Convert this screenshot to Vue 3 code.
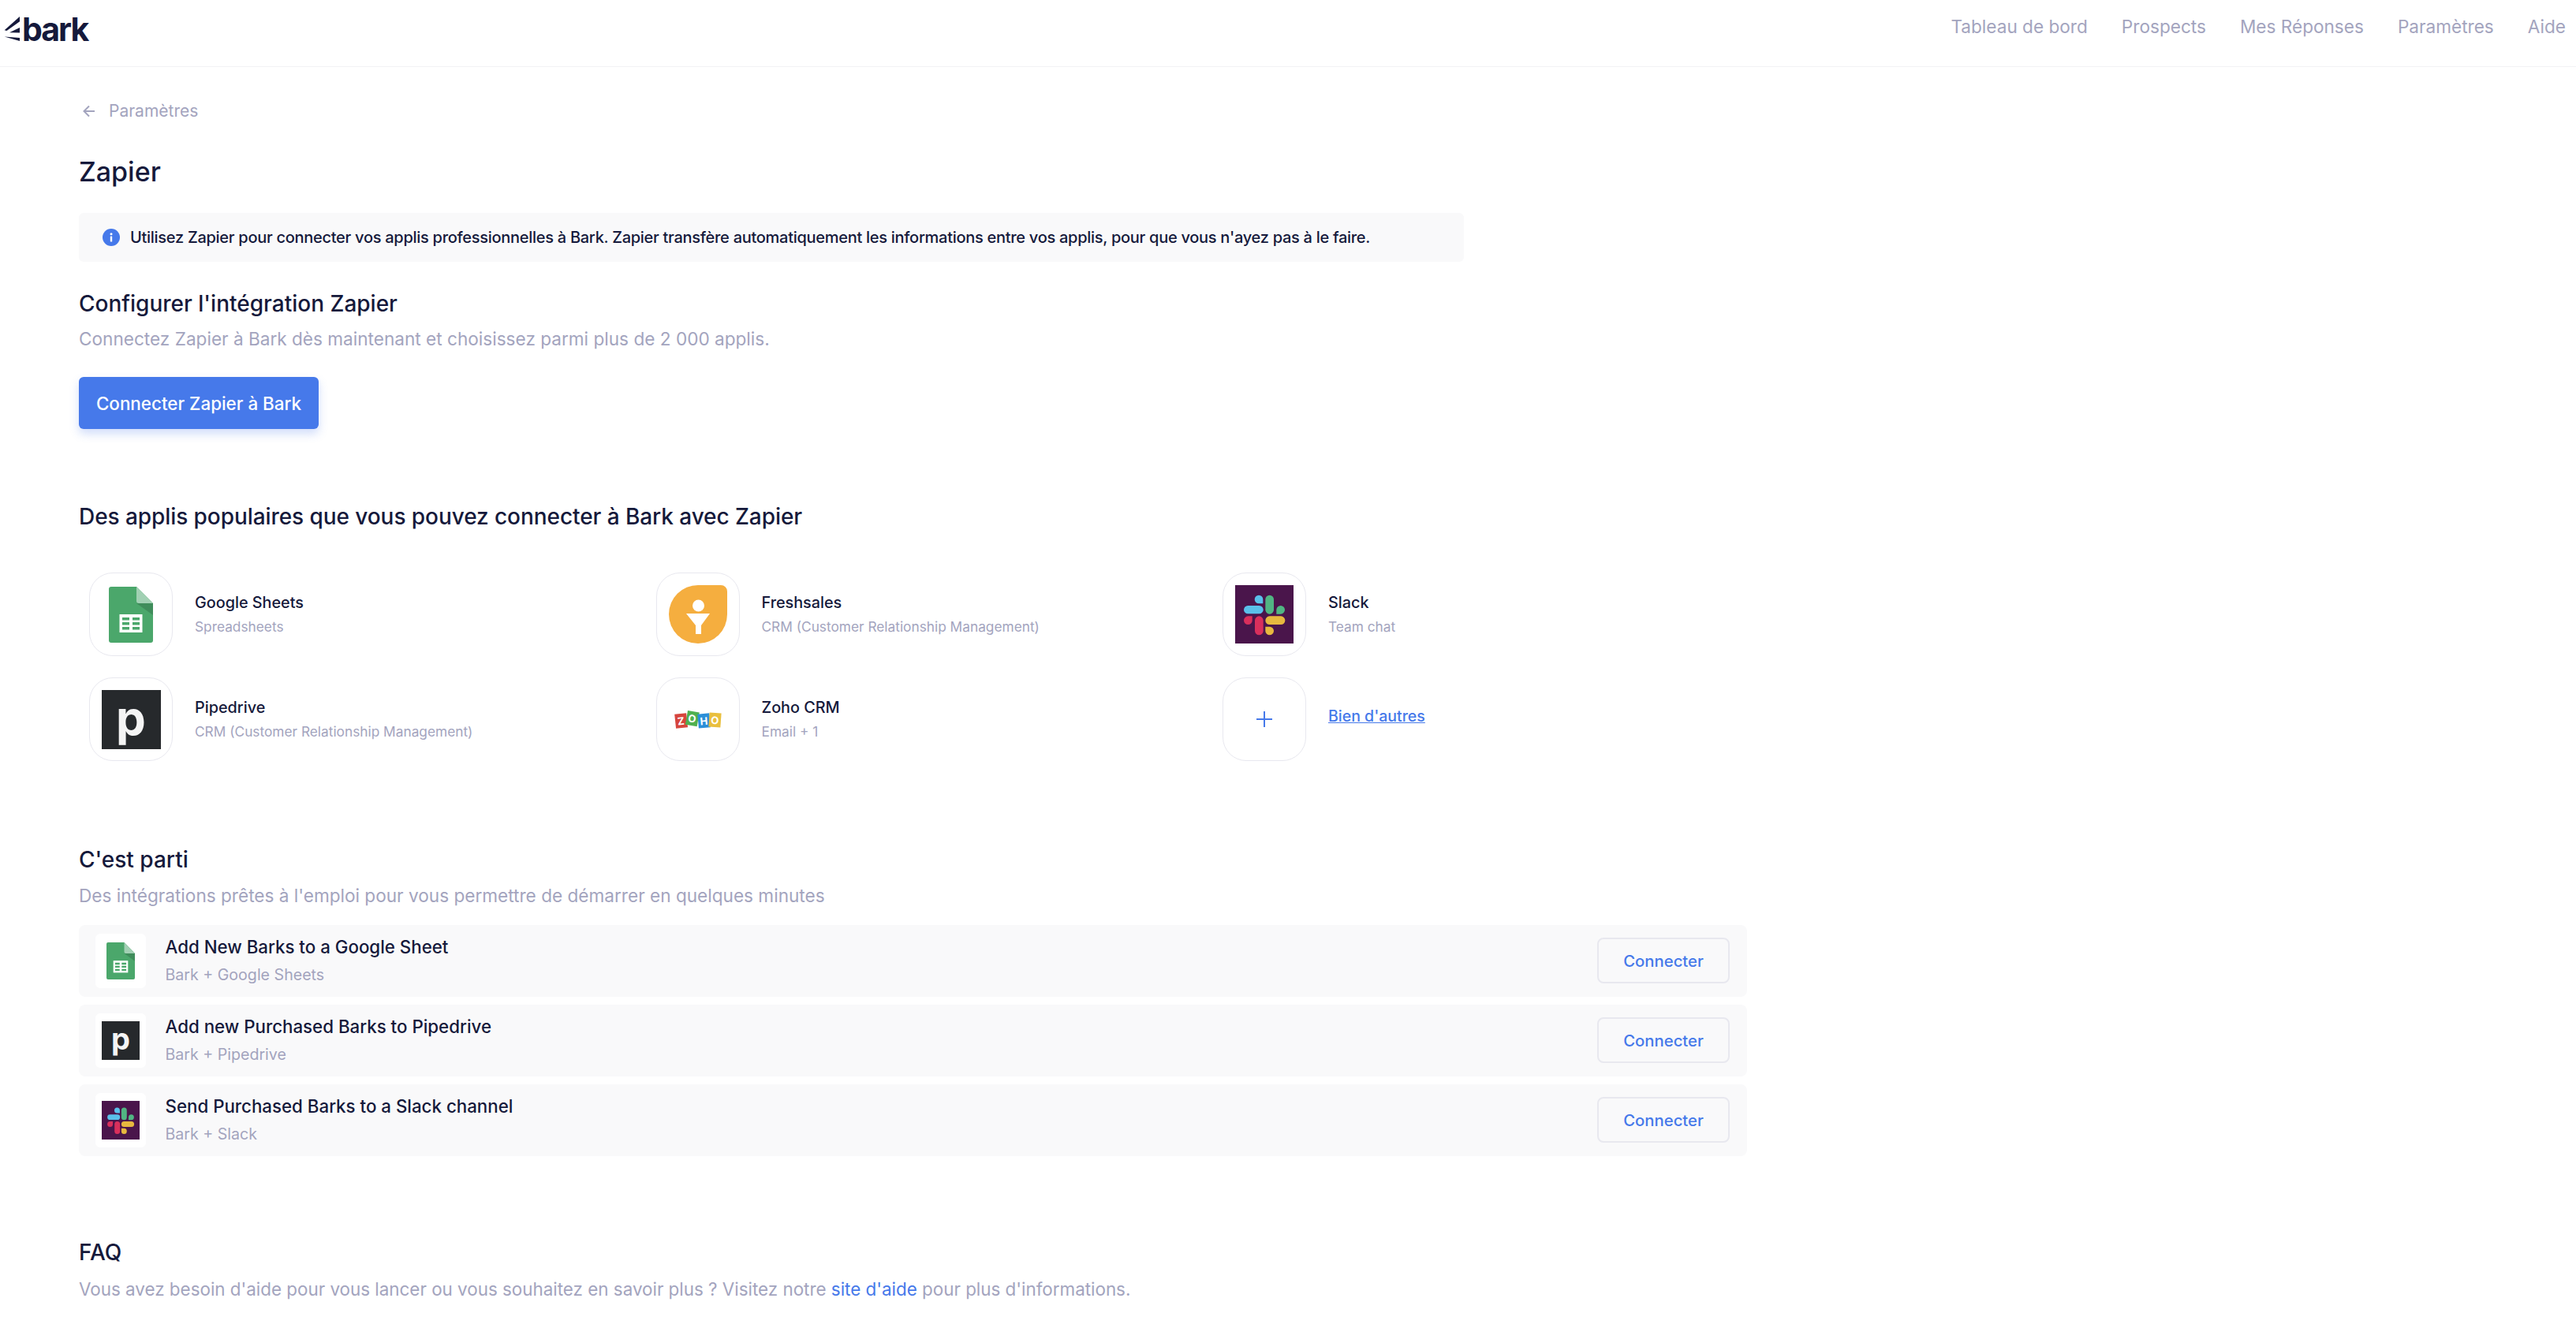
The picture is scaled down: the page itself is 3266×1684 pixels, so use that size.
<script setup>
// Приложения в сетке
const apps = [
  { icon: "sheets", name: "Google Sheets", desc: "Spreadsheets" },
  { icon: "freshsales", name: "Freshsales", desc: "CRM (Customer Relationship Management)" },
  { icon: "slack", name: "Slack", desc: "Team chat" },
  { icon: "pipedrive", name: "Pipedrive", desc: "CRM (Customer Relationship Management)" },
  { icon: "zoho", name: "Zoho CRM", desc: "Email + 1" },
];

const zaps = [
  { icon: "sheets", title: "Add New Barks to a Google Sheet", desc: "Bark + Google Sheets" },
  { icon: "pipedrive", title: "Add new Purchased Barks to Pipedrive", desc: "Bark + Pipedrive" },
  { icon: "slack", title: "Send Purchased Barks to a Slack channel", desc: "Bark + Slack" },
];

const navLinks = ["Tableau de bord", "Prospects", "Mes Réponses", "Paramètres", "Aide"];
const zohoTiles = [
  { letter: "Z", color: "#d6453d", transform: "rotate(-6deg) translateY(1px)" },
  { letter: "O", color: "#4fb04f", transform: "rotate(10deg) translateY(-2px)" },
  { letter: "H", color: "#2b8fd8", transform: "rotate(-5deg) translateY(1px)" },
  { letter: "O", color: "#e9bf3e", transform: "rotate(4deg)" },
];
</script>

<template>
  <div class="page">
    <header class="topbar">
      <a class="logo">
        <svg class="logo-mark" viewBox="0 0 20 32">
          <path d="M20 0v6.300L3.500 18 0.700 17.300 Z" />
          <path d="M20 14v6.500L7 20.300 Z" />
          <path d="M0.700 25.500L20 27v4 Z" />
        </svg>
        <span class="logo-text">bark</span>
      </a>
      <nav class="nav">
        <a v-for="link in navLinks" :key="link">{{ link }}</a>
      </nav>
    </header>

    <main class="content">
      <a class="back">
        <svg viewBox="0 0 16 16" class="back-arrow">
          <path d="M15 8H2M8 1.500L1.500 8 8 14.500" fill="none" stroke="currentColor" stroke-width="2" />
        </svg>
        Paramètres
      </a>

      <h1>Zapier</h1>

      <div class="info">
        <svg class="info-icon" viewBox="0 0 22 22">
          <circle cx="11" cy="11" r="11" fill="#4679ea" />
          <rect x="9.800" y="9.500" width="2.400" height="7" rx="0.600" fill="#fff" />
          <circle cx="11" cy="6.800" r="1.500" fill="#fff" />
        </svg>
        Utilisez Zapier pour connecter vos applis professionnelles à Bark. Zapier transfère automatiquement les informations entre vos applis, pour que vous n'ayez pas à le faire.
      </div>

      <h2 class="setup-title">Configurer l'intégration Zapier</h2>
      <p class="lead setup-lead">Connectez Zapier à Bark dès maintenant et choisissez parmi plus de 2 000 applis.</p>
      <button class="primary">Connecter Zapier à Bark</button>

      <h2 class="popular-title">Des applis populaires que vous pouvez connecter à Bark avec Zapier</h2>

      <div class="app-grid">
        <div v-for="app in apps" :key="app.name" class="app">
          <div class="tile">
            <svg v-if="app.icon === 'sheets'" class="ic-sheets"><use href="#ic-sheets" /></svg>
            <svg v-else-if="app.icon === 'freshsales'" class="ic-fresh"><use href="#ic-fresh" /></svg>
            <svg v-else-if="app.icon === 'slack'" class="ic-square"><use href="#ic-slack" /></svg>
            <div v-else-if="app.icon === 'pipedrive'" class="pipe">p</div>
            <div v-else class="zoho">
              <span
                v-for="(t, i) in zohoTiles"
                :key="i"
                :style="{ background: t.color, transform: t.transform }"
              >{{ t.letter }}</span>
            </div>
          </div>
          <div class="app-text">
            <div class="app-name">{{ app.name }}</div>
            <div class="app-desc">{{ app.desc }}</div>
          </div>
        </div>
        <div class="app">
          <div class="tile">
            <svg class="plus" viewBox="0 0 20 20">
              <path d="M10 0v20M0 10h20" stroke="#4679ea" stroke-width="2" fill="none" />
            </svg>
          </div>
          <a class="more">Bien d'autres</a>
        </div>
      </div>

      <h2 class="start-title">C'est parti</h2>
      <p class="lead start-lead">Des intégrations prêtes à l'emploi pour vous permettre de démarrer en quelques minutes</p>

      <div class="zaps">
        <div v-for="zap in zaps" :key="zap.title" class="zap">
          <div class="zap-tile">
            <svg v-if="zap.icon === 'sheets'" class="zap-sheets"><use href="#ic-sheets" /></svg>
            <svg v-else-if="zap.icon === 'slack'" class="zap-square"><use href="#ic-slack" /></svg>
            <div v-else class="pipe pipe-small">p</div>
          </div>
          <div class="zap-text">
            <div class="zap-title">{{ zap.title }}</div>
            <div class="zap-desc">{{ zap.desc }}</div>
          </div>
          <button class="connect">Connecter</button>
        </div>
      </div>

      <h2 class="faq-title">FAQ</h2>
      <p class="lead faq-lead">Vous avez besoin d'aide pour vous lancer ou vous souhaitez en savoir plus ? Visitez notre <a>site d'aide</a> pour plus d'informations.</p>
    </main>

    <!-- Символы иконок -->
    <svg class="defs">
      <symbol id="ic-sheets" viewBox="0 0 56 71" preserveAspectRatio="none">
        <path d="M3 0h32l21 21v47a3 3 0 0 1-3 3H3a3 3 0 0 1-3-3V3a3 3 0 0 1 3-3z" fill="#4ba76b" />
        <path d="M35 21h21v15z" fill="#3f8d5b" />
        <path d="M35 0l21 21H38a3 3 0 0 1-3-3z" fill="#a1d0b3" />
        <rect x="13.500" y="35" width="29" height="23" fill="#fff" />
        <path d="M17 39h9v3.500h-9zM30 39h9v3.500h-9zM17 45h9v3.500h-9zM30 45h9v3.500h-9zM17 51h9v3.500h-9zM30 51h9v3.500h-9z" fill="#4ba76b" />
      </symbol>
      <symbol id="ic-fresh" viewBox="0 0 74 74">
        <path d="M37 0H66a8 8 0 0 1 8 8V37A37 37 0 0 1 0 37 37 37 0 0 1 37 0z" fill="#f5ae3f" />
        <circle cx="37.500" cy="26" r="7.500" fill="#fff" />
        <path d="M22 36h30L41 51v11h-7V51z" fill="#fff" />
      </symbol>
      <symbol id="ic-slack" viewBox="0 0 222 222" preserveAspectRatio="none">
        <rect width="222" height="222" fill="#4a154b" />
        <rect x="33" y="78" width="74" height="31" rx="15.500" fill="#5ac0ea" />
        <path d="M90 38a16 16 0 0 1 16 16v16H90a16 16 0 0 1 0-32z" fill="#5ac0ea" />
        <rect x="115" y="38" width="32" height="72" rx="16" fill="#51b583" />
        <path d="M173 78a16 16 0 0 1 0 32h-16V94a16 16 0 0 1 16-16z" fill="#51b583" />
        <rect x="75" y="118" width="32" height="72" rx="16" fill="#d92f5c" />
        <path d="M49 118h16v16a16 16 0 1 1-16-16z" fill="#d92f5c" />
        <rect x="115" y="118" width="75" height="32" rx="16" fill="#e7b83f" />
        <path d="M115 158h16a16 16 0 0 1 0 32 16 16 0 0 1-16-16z" fill="#e7b83f" />
      </symbol>
    </svg>
  </div>
</template>

<style>
body {
  background: #fff;
}
</style>

<style scoped>
.page {
  font-family: Inter, "Noto Sans", sans-serif;
  color: #15193b;
  font-weight: 400;
}

.defs {
  display: none;
}

.topbar {
  height: 84px;
  display: flex;
  align-items: center;
  justify-content: space-between;
  border-bottom: 1px solid #f2f2f5;
  padding: 0 13px 0 5px;
}

.logo {
  display: flex;
  align-items: center;
  gap: 3px;
  margin-bottom: 10px;
}

.logo-mark {
  width: 20px;
  height: 32px;
  fill: #15193b;
}

.logo-text {
  font-size: 41px;
  font-weight: 700;
  line-height: 42px;
  letter-spacing: -2px;
}

.nav {
  display: flex;
  gap: 43px;
  font-size: 22.600px;
  color: #a3a4be;
  margin-bottom: 18px;
}

.content {
  padding-left: 100px;
  width: 2115px;
}

.back {
  display: flex;
  align-items: center;
  gap: 17px;
  margin: 41px 0 0 5px;
  font-size: 21px;
  line-height: 30px;
  color: #a3a4be;
}

.back-arrow {
  width: 16px;
  height: 16px;
}

h1 {
  margin: 40px 0 0;
  font-size: 34px;
  line-height: 44px;
  font-weight: 500;
}

h2 {
  margin: 0;
  font-size: 28px;
  line-height: 36px;
  font-weight: 500;
}

.lead {
  margin: 0;
  font-size: 22.600px;
  line-height: 30px;
  color: #a3a4be;
}

.lead a {
  color: #4679ea;
}

.info {
  display: flex;
  align-items: center;
  gap: 13px;
  width: 1756px;
  height: 62px;
  margin-top: 30px;
  padding-left: 30px;
  box-sizing: border-box;
  background: #f9f9fa;
  border-radius: 6px;
  font-size: 20px;
  font-weight: 500;
  letter-spacing: -0.280px;
}

.info-icon {
  width: 22px;
  height: 22px;
  flex: none;
}

.setup-title {
  margin-top: 35px;
}

.setup-lead {
  margin-top: 12px;
}

.primary {
  display: block;
  width: 304px;
  height: 66px;
  margin-top: 33px;
  border: 0;
  border-radius: 6px;
  background: #4679ea;
  box-shadow: 0 6px 12px rgba(70, 121, 234, 0.25);
  color: #fff;
  font: inherit;
  font-size: 22.400px;
  font-weight: 500;
}

.popular-title {
  margin-top: 93px;
  letter-spacing: -0.070px;
}

.app-grid {
  display: grid;
  grid-template-columns: repeat(3, 718.5px);
  row-gap: 27px;
  margin-top: 53px;
  padding-left: 13px;
}

.app {
  display: flex;
  align-items: center;
  gap: 28px;
}

.app-text {
  margin-bottom: 2px;
}

.tile {
  width: 106px;
  height: 106px;
  box-sizing: border-box;
  flex: none;
  display: flex;
  align-items: center;
  justify-content: center;
  border: 1px solid #e8e8ef;
  border-radius: 30px;
  background: #fff;
}

.ic-sheets {
  width: 56px;
  height: 71px;
}

.ic-fresh,
.ic-square {
  width: 74px;
  height: 74px;
}

.pipe {
  width: 75px;
  height: 75px;
  background: #26292c;
  color: #f4f4f4;
  font-weight: 700;
  font-size: 60px;
  line-height: 70px;
  text-align: center;
}

.zoho {
  display: flex;
  margin-top: 2px;
}

.zoho span {
  width: 14.500px;
  height: 18px;
  color: #fff;
  font-size: 13px;
  font-weight: 700;
  line-height: 18px;
  text-align: center;
}

.app-name {
  font-size: 19.800px;
  line-height: 28px;
  font-weight: 500;
}

.app-desc {
  margin-top: 5px;
  font-size: 17.300px;
  line-height: 24px;
  color: #a3a4be;
}

.plus {
  width: 20px;
  height: 20px;
}

.more {
  margin-bottom: 8px;
  font-size: 19.500px;
  font-weight: 500;
  color: #4679ea;
  text-decoration: underline;
}

.start-title {
  margin-top: 107px;
}

.start-lead {
  margin-top: 13px;
}

.zaps {
  display: flex;
  flex-direction: column;
  gap: 10.500px;
  margin-top: 22px;
}

.zap {
  display: flex;
  align-items: center;
  height: 90.500px;
  padding: 0 22px 0 21px;
  background: #f9f9fa;
  border-radius: 8px;
}

.zap-tile {
  width: 64px;
  height: 69px;
  flex: none;
  display: flex;
  align-items: center;
  justify-content: center;
  background: #fff;
  border-radius: 6px;
}

.zap-sheets {
  width: 36px;
  height: 47px;
}

.zap-square {
  width: 48px;
  height: 49px;
}

.pipe-small {
  width: 48px;
  height: 49px;
  font-size: 38px;
  line-height: 44px;
}

.zap-text {
  flex: 1;
  margin-left: 24.500px;
}

.zap-title {
  font-size: 22.300px;
  line-height: 30px;
  font-weight: 500;
}

.zap-desc {
  margin-top: 6px;
  font-size: 19.600px;
  line-height: 28px;
  color: #a3a4be;
}

.connect {
  width: 168px;
  height: 58px;
  border: 2px solid #e8e8ef;
  border-radius: 8px;
  background: transparent;
  color: #4679ea;
  font: inherit;
  font-size: 20.300px;
  font-weight: 500;
}

.faq-title {
  margin-top: 104px;
}

.faq-lead {
  margin-top: 14px;
  font-size: 22.400px;
}
</style>
